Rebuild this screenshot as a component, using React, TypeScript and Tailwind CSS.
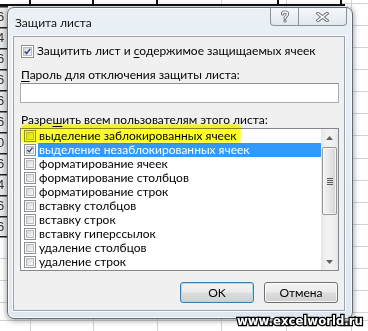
import React from "react";

const items = [
  "выделение заблокированных ячеек",
  "выделение незаблокированных ячеек",
  "форматирование ячеек",
  "форматирование столбцов",
  "форматирование строк",
  "вставку столбцов",
  "вставку строк",
  "вставку гиперссылок",
  "удаление столбцов",
  "удаление строк",
];

function CheckMark() {
  return (
    <svg className="absolute inset-0" width="100%" height="100%" viewBox="0 0 13 13">
      <path d="M3.2 6.4 L5.4 9 L9.8 3.4" fill="none" stroke="#30468a" strokeWidth="1.8" strokeLinejoin="round" />
    </svg>
  );
}

function Box({ checked, big }: { checked?: boolean; big?: boolean }) {
  return (
    <span
      className={
        (big ? "w-[13px] h-[13px]" : "w-[12px] h-[12px]") +
        " relative shrink-0 border border-[#8e8f8f] bg-white p-px"
      }
    >
      <span className="block w-full h-full border border-[#b9bdc2] bg-[linear-gradient(135deg,#d5d8dc,#f7f7f7)]" />
      {checked && <CheckMark />}
    </span>
  );
}

function SheetBackground() {
  const rightRows = [3, 25, 47, 69, 91, 113, 135, 158, 180, 202, 224, 246, 268, 290, 312];
  const leftRows = [6, 27, 48, 69, 90, 111, 132, 153, 174, 195, 216];
  const digits = ["6", "4", "6", "6", "6", "6", "0", "6", "4", "6", "6"];
  return (
    <svg className="absolute inset-0" width="368" height="331" viewBox="0 0 368 331">
      <rect x="0" y="0" width="368" height="331" fill="#ffffff" />
      {[30, 93, 157, 221, 286, 351].map((x) => (
        <line key={x} x1={x + 0.5} y1="0" x2={x + 0.5} y2="331" stroke="#d4d4d4" />
      ))}
      {rightRows.map((y) => (
        <line key={y} x1="340" y1={y + 0.5} x2="368" y2={y + 0.5} stroke="#d4d4d4" />
      ))}
      {[258, 280, 302].map((y) => (
        <line key={"l" + y} x1="0" y1={y + 0.5} x2="10" y2={y + 0.5} stroke="#d4d4d4" />
      ))}
      <line x1="0" y1="320.5" x2="368" y2="320.5" stroke="#d4d4d4" />
      <rect x="0" y="4" width="345" height="2" fill="#111" />
      {[29, 92, 156, 277, 340].map((x) => (
        <rect key={x} x={x} y="0" width="2" height="6" fill="#111" />
      ))}
      <rect x="0" y="6" width="8" height="231" fill="#e9e9e9" />
      <rect x="0" y="236" width="8" height="1.5" fill="#222" />
      {leftRows.map((y, i) => (
        <g key={y}>
          <rect x="0" y={y} width="8" height="1.5" fill="#222" />
          <text x="-3" y={y + 15} fontSize="13" fontFamily="'Liberation Sans', Arial, sans-serif" fill="#333">
            {digits[i]}
          </text>
        </g>
      ))}
    </svg>
  );
}

function ScrollBar() {
  return (
    <div className="w-[17px] shrink-0 flex flex-col bg-[linear-gradient(to_right,#e6e6e6,#f1f1f1_30%,#f1f1f1_70%,#e6e6e6)]">
      <div className="h-[17px] flex items-center justify-center">
        <svg width="7" height="4" viewBox="0 0 7 4">
          <path d="M0 4 L3.5 0 L7 4 Z" fill="#606060" />
        </svg>
      </div>
      <div className="mt-px mx-px h-[68px] rounded-[2px] border border-[#979797] bg-[linear-gradient(to_right,#f3f3f3,#e6e6e6_50%,#d4d4d4)] flex items-center justify-center shadow-[inset_0_0_0_1px_rgba(255,255,255,0.7)]">
        <div className="flex flex-col gap-px">
          <div className="w-[6px] h-px bg-[#5a5a5a]" />
          <div className="w-[6px] h-px bg-[#5a5a5a]" />
          <div className="w-[6px] h-px bg-[#5a5a5a]" />
          <div className="w-[6px] h-px bg-[#5a5a5a]" />
        </div>
      </div>
      <div className="flex-1" />
      <div className="h-[17px] flex items-center justify-center">
        <svg width="7" height="4" viewBox="0 0 7 4">
          <path d="M0 0 L3.5 4 L7 0 Z" fill="#606060" />
        </svg>
      </div>
    </div>
  );
}

function HelpIcon() {
  return (
    <svg width="10" height="13" viewBox="0 0 10 13">
      <path d="M2.5 4 C2.5 1.3 7.5 1.3 7.5 4 C7.5 6 5 6.2 5 8.3" fill="none" stroke="#6a6f76" strokeWidth="3.2" strokeLinecap="round" />
      <path d="M2.5 4 C2.5 1.3 7.5 1.3 7.5 4 C7.5 6 5 6.2 5 8.3" fill="none" stroke="#ffffff" strokeWidth="1.4" strokeLinecap="round" />
      <circle cx="5" cy="11" r="1.6" fill="#6a6f76" />
      <circle cx="5" cy="11" r="0.7" fill="#ffffff" />
    </svg>
  );
}

function CloseIcon() {
  return (
    <svg width="13" height="10" viewBox="0 0 13 10">
      <path d="M2 1.5 L11 8.5 M11 1.5 L2 8.5" fill="none" stroke="#6a6f76" strokeWidth="3.4" strokeLinecap="square" />
      <path d="M2 1.5 L11 8.5 M11 1.5 L2 8.5" fill="none" stroke="#ffffff" strokeWidth="1.5" strokeLinecap="square" />
    </svg>
  );
}

const btnBg =
  "bg-[linear-gradient(to_bottom,#f3f3f3_0%,#ebebeb_48%,#dddddd_52%,#d0d0d0_100%)]";

export default function App() {
  return (
    <div
      className="relative w-[368px] h-[331px] overflow-hidden bg-white text-[12px] text-black"
      style={{ fontFamily: "Lato, 'Liberation Sans', sans-serif" }}
    >
      <SheetBackground />

      <div className="absolute left-[7px] top-[7px] w-[346px] h-[312px] rounded-[7px] border border-[#636b74] bg-[linear-gradient(to_bottom,#eaf0f6,#dfe7f0)] shadow-[0_1px_6px_rgba(0,0,0,0.45),inset_0_0_0_1px_rgba(255,255,255,0.8)] flex flex-col">
        <div className="h-[28px] flex items-start">
          <div className="ml-[7px] mt-[7px] leading-[16px] text-[#111]">Защита листа</div>
          <div className="ml-auto mr-[5px] flex h-[18px] border border-t-0 border-[#8a939d] rounded-b-[4px] overflow-hidden bg-[linear-gradient(to_bottom,#f5f7fa,#e2e8ef)]">
            <div className="w-[28px] flex items-center justify-center border-r border-[#8a939d]">
              <HelpIcon />
            </div>
            <div className="w-[47px] flex items-center justify-center">
              <CloseIcon />
            </div>
          </div>
        </div>

        <div className="ml-[5px] mr-[7px] mb-[7px] flex-1 border border-[#9aa3ad] bg-[#f0f0f0] shadow-[0_0_0_1px_rgba(255,255,255,0.85)] flex flex-col pl-[6px]">
          <div className="mt-[6px] h-[16px] flex items-center gap-[3px] ml-px">
            <Box checked big />
            <span className="leading-[16px]">
              Защитить лист и <span className="underline underline-offset-2">с</span>одержимое защищаемых ячеек
            </span>
          </div>

          <div className="mt-[8px] leading-[16px] pl-px">
            <span className="underline underline-offset-2">П</span>ароль для отключения защиты листа:
          </div>
          <div className="h-[20px] w-[319px] border border-[#abadb3] border-t-[#8e9196] bg-white" />

          <div className="mt-[9px] leading-[16px] pl-px">
            Разре<span className="underline underline-offset-2">ш</span>ить всем пользователям этого листа:
          </div>

          <div className="h-[143px] w-[319px] border border-[#828790] bg-white flex">
            <div className="flex-1 flex flex-col">
              {items.map((t, i) => (
                <div key={t} className="h-[14px] flex items-center">
                  <span className="ml-[3px] flex">
                    <Box checked={i === 1} />
                  </span>
                  <span
                    className={
                      "ml-[2px] flex-1 h-[14px] leading-[14px] pl-px whitespace-nowrap " +
                      (i === 1 ? "bg-[#3399ff] text-white" : "")
                    }
                  >
                    {t}
                  </span>
                </div>
              ))}
            </div>
            <ScrollBar />
          </div>

          <div className="mt-[11px] flex justify-end gap-[10px] pr-[6px]">
            <button
              className={
                "w-[74px] h-[21px] rounded-[3px] border border-[#3c7fb1] shadow-[inset_0_0_0_1px_#a9d8f5] leading-[19px] text-[12px] " +
                btnBg
              }
            >
              OK
            </button>
            <button
              className={
                "w-[74px] h-[21px] rounded-[3px] border border-[#707070] shadow-[inset_0_0_0_1px_rgba(255,255,255,0.8)] leading-[19px] text-[12px] " +
                btnBg
              }
            >
              Отмена
            </button>
          </div>
        </div>
      </div>

      <div className="absolute left-[21px] top-[124px] w-[220px] h-[19px] rounded-[4px] bg-[#ffff1a] mix-blend-multiply blur-[1px] opacity-95" />

      <div
        className="absolute left-[237px] top-[312px] text-[13px] font-bold leading-[17px] text-white [-webkit-text-stroke:2.5px_#000] [paint-order:stroke_fill]"
        style={{ fontFamily: "'DejaVu Sans Condensed', 'DejaVu Sans', sans-serif" }}
      >
        www.excelworld.ru
      </div>
    </div>
  );
}
